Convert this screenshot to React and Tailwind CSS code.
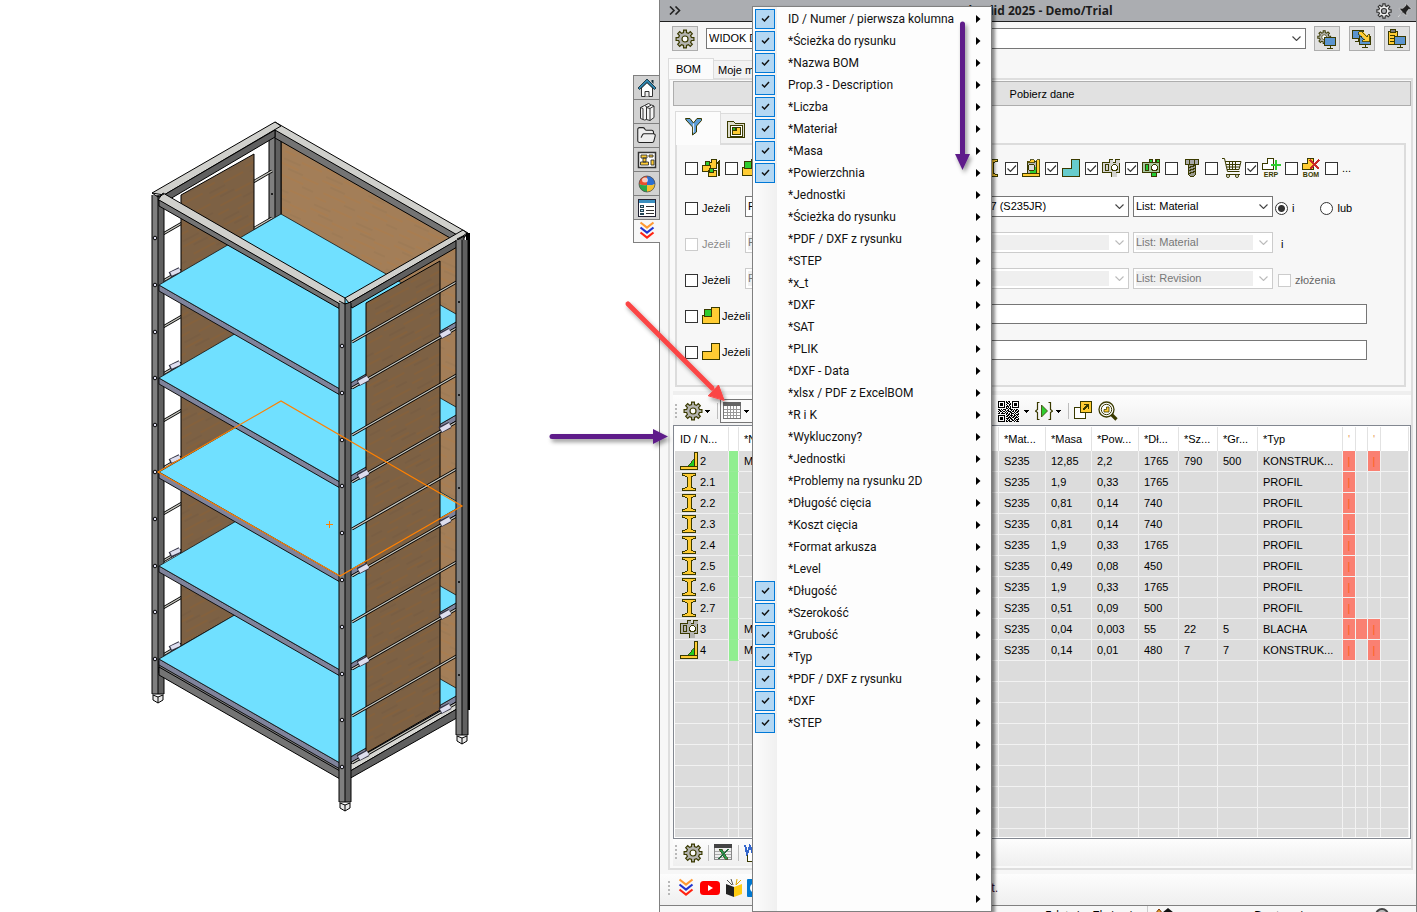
import React from "react";
import { FolderOpen } from "lucide-react";

const INK = "#3a3a00";

/* ---------- small drawings ---------- */

function gearPath(c, outer, inner, teeth) {
  const pts = [];
  const step = (Math.PI * 2) / teeth;
  for (let i = 0; i < teeth; i++) {
    const a = i * step;
    [[-0.3, inner], [-0.2, outer], [0.2, outer], [0.3, inner]].forEach(([k, r]) => {
      pts.push(`${(c + r * Math.sin(a + k * step)).toFixed(1)},${(c - r * Math.cos(a + k * step)).toFixed(1)}`);
    });
  }
  return `M${pts.join("L")}Z`;
}
const GEAR = gearPath(10, 9, 6.6, 8);

function Icon({ w = 20, h = 20, box, children, crisp = true, className = "" }) {
  return (
    <svg width={w} height={h} viewBox={box || `0 0 ${w} ${h}`} className={`shrink-0 ${className}`} shapeRendering={crisp ? "crispEdges" : "auto"} aria-hidden="true">
      {children}
    </svg>
  );
}

const Gear = () => (
  <Icon crisp={false}>
    <path d={GEAR} fill="#b4b4b0" stroke={INK} strokeWidth="1.2" />
    <circle cx="10" cy="10" r="3" fill="#fff" stroke={INK} strokeWidth="1.2" />
  </Icon>
);

const Monitor = ({ x, y }) => (
  <g>
    <rect x={x + 0.5} y={y + 0.5} width="11" height="8" fill="#5b95d0" stroke={INK} />
    <path d={`M${x + 6} ${y + 9}v2M${x + 3} ${y + 11.5}h6`} stroke={INK} fill="none" />
  </g>
);

const GearMonitor = () => (
  <Icon>
    <g transform="translate(0 1) scale(0.72)" shapeRendering="auto">
      <path d={GEAR} fill="#b4b4b0" stroke={INK} strokeWidth="1.4" />
      <circle cx="10" cy="10" r="3.4" fill="#fff" stroke={INK} />
    </g>
    <Monitor x={7} y={8} />
  </Icon>
);
const CopyMonitor = () => (
  <Icon>
    <Monitor x={0} y={1} />
    <Monitor x={7} y={7} />
    <path d="M6.5 2.5h4l5 5v-2h2v7h-7v-2h2l-6-6z" fill="#ffcc33" stroke={INK} strokeWidth="0.8" />
  </Icon>
);
const ClipMonitor = () => (
  <Icon>
    <rect x="1.5" y="2.5" width="9" height="13" fill="#ffcc33" stroke={INK} />
    <rect x="3.5" y="0.5" width="5" height="3" fill="#777" stroke={INK} />
    <path d="M3 6.5h5M3 9.5h4M3 12.5h4" stroke={INK} />
    <Monitor x={7} y={7} />
  </Icon>
);

const Funnel = () => (
  <Icon crisp={false}>
    <path d="M1.5 1.5h4.5l3.5 4.5 3.5-4.5h4.5v2l-5 5.5v6l-4 3v-8l-6.5-7z" fill="#5b9bd5" stroke={INK} />
    <path d="M9.5 6.5v9" stroke="#dbe9f6" strokeWidth="1.2" fill="none" />
  </Icon>
);
const FolderPart = () => (
  <Icon>
    <path d="M1.5 18.5v-16h6l2 2h9v14z" fill="#dcdccb" stroke={INK} strokeWidth="1.4" />
    <rect x="4.5" y="6.5" width="12" height="11" fill="#fff" stroke={INK} />
    <path d="M6.5 15.5v-4h4v-3h4v7z" fill="#ffcc33" stroke={INK} />
    <rect x="6.5" y="8.5" width="3" height="3" fill="#22b822" stroke={INK} />
  </Icon>
);
const Asm = () => (
  <Icon>
    <path d="M5.5 10.5v-6h4v-3h5v9z" fill="#ffcc33" stroke={INK} />
    <path d="M0.5 13.5v-6h8v6z" fill="#ffcc33" stroke={INK} />
    <rect x="3.5" y="3.5" width="4" height="4" fill="#2ecc2e" stroke={INK} />
    <path d="M6.5 18.5v-6h8v6z" fill="#ffcc33" stroke={INK} />
    <rect x="7.5" y="10.5" width="4" height="4" fill="#2ecc2e" stroke={INK} />
    <path d="M13 6l5-5v17h-2V6z" fill={INK} />
  </Icon>
);
const GreenPart = ({ green = true }) => (
  <Icon>
    <path d="M0.5 17.5v-8h9v-8h8v16z" fill="#ffcc33" stroke={INK} />
    {green && <rect x="2.5" y="3.5" width="7" height="7" fill="#2ecc2e" stroke={INK} />}
  </Icon>
);
const Beam = () => (
  <Icon w={18} h={20}>
    <path d="M2.5 1.5h13v2h-2l-2.5 1.5v10l2.5 1.5h2v2h-13v-2h2l2.5-1.5v-10l-2.5-1.5h-2z" fill="#ffcc33" stroke={INK} />
  </Icon>
);
const Weld = () => (
  <Icon>
    <path d="M5 3.5h9v13h-9z" fill="#b4b4b4" stroke={INK} />
    <path d="M5 3h3v-1.5h4v3h-7zM14.5 1.5h3v14h-3z" fill="#ffcc33" stroke={INK} strokeWidth="0.8" />
    <path d="M0.5 15.5h17v3h-17z" fill="#ffcc33" stroke={INK} />
    <path d="M8 15c0-4 3-6 6-6v6z" fill="#2ecc2e" />
    <circle cx="9.5" cy="9.5" r="3.2" fill="#ddd" stroke={INK} />
  </Icon>
);
const TealPart = () => (
  <Icon>
    <path d="M0.5 18.5v-8h9v-9h8v17z" fill="#66cccc" stroke={INK} />
  </Icon>
);
const Sheet = ({ fill = "#d4d4d0", accent = "#d4d4d0", body = fill }) => (
  <Icon>
    <path d="M0.5 4.5h7v-3h3v3h3v-3h4v13h-3v4h-5v-4h-9z" fill={body} stroke={INK} />
    <path d="M9.5 14.5h5v4h-5zM7.5 1.5h3v3h-3zM14.5 1.5h3v3h-3z" fill={accent} stroke={accent === body ? "none" : INK} />
    <rect x="3.5" y="6.5" width="3" height="6" fill={accent} stroke={INK} />
    <circle cx="12.5" cy="9.5" r="3" fill="#fff" stroke={INK} />
  </Icon>
);
const Bolt = () => (
  <Icon>
    <path d="M3.5 1.5h13v5h-13z" fill="#aaa" stroke={INK} />
    <path d="M7.5 1.5v5M12.5 1.5v5" stroke={INK} />
    <path d="M6.5 6.5h7v10l-2 2h-3l-2-2z" fill="#9a9a90" stroke={INK} />
    <path d="M7 9.5l6-2M7 12.5l6-2M7 15.5l6-2" stroke={INK} />
  </Icon>
);
const Cart = () => (
  <Icon crisp={false}>
    <path d="M0 0.5h2.5l3 13h12M3 3.5h16l-2 8H5M4 6.5h14M4.5 9h13M7.5 3.5v8M10.5 3.5v8M13.5 3.5v8M4 16.5h14" fill="none" stroke={INK} />
    <circle cx="6" cy="18" r="1.5" fill="#fff" stroke={INK} />
    <circle cx="15" cy="18" r="1.5" fill="#fff" stroke={INK} />
  </Icon>
);
const TinyLabel = ({ children }) => (
  <text x="9" y="19" textAnchor="middle" fontFamily="Liberation Sans, sans-serif" fontSize="7" fontWeight="700" fill={INK}>
    {children}
  </text>
);
const Erp = () => (
  <Icon>
    <path d="M0.5 11.5v-6h5v-5h6v11z" fill="#fff" stroke={INK} />
    <path d="M14 2v10M9 7h10" stroke="#2ecc2e" strokeWidth="2" />
    <TinyLabel>ERP</TinyLabel>
  </Icon>
);
const NoBom = () => (
  <Icon>
    <path d="M0.5 11.5v-6h5v-5h6v11z" fill="#ffcc33" stroke={INK} />
    <path d="M8 2l9 9M17 2l-9 9" stroke="#c82828" strokeWidth="1.6" />
    <TinyLabel>BOM</TinyLabel>
  </Icon>
);
const Angle = () => (
  <Icon w={19} h={20}>
    <path d="M14.5 1.5h3v14h-3z" fill="#ffcc33" stroke={INK} />
    <path d="M0.5 15.5h17v3h-17z" fill="#ffcc33" stroke={INK} />
    <path d="M8 15l6-7v7z" fill="#22cc22" stroke={INK} strokeWidth="0.8" />
  </Icon>
);

const TableIcon = () => (
  <Icon w={18} h={18}>
    <rect x="0.5" y="0.5" width="17" height="16" fill="#fff" stroke="#777" />
    <rect x="0" y="0" width="18" height="4" fill="#666" />
    <path d="M1 7.5h16M1 10.5h16M1 13.5h16M4.5 4v12M7.5 4v12M10.5 4v12M13.5 4v12" stroke="#999" />
  </Icon>
);
const QR_ROWS = [
  "111111101011001111111",
  "100000101101001000001",
  "101110100110101011101",
  "101110101001101011101",
  "101110100101001011101",
  "100000101110101000001",
  "111111101010101111111",
  "000000001101100000000",
  "110101110010111010110",
  "011010010110010101101",
  "101101101011101101011",
  "010010010100110010110",
  "110111101101011101001",
  "000000001011010010111",
  "111111100110111011010",
  "100000101101010110101",
  "101110100011101101110",
  "101110101110110011001",
  "101110100101011010111",
  "100000101011001101010",
  "111111101101110010111",
];
const Qr = () => (
  <Icon w={21} h={21}>
    {QR_ROWS.map((r, y) => r.split("").map((c, x) => (c === "1" ? <rect key={`${x}-${y}`} x={x} y={y} width="1" height="1" fill="#000" /> : null)))}
  </Icon>
);
const Run = () => (
  <Icon crisp={false} w={18}>
    <path d="M4.5 1.5h-2v7l-2 1.5 2 1.5v7h2M13.5 1.5h2v7l2 1.5-2 1.5v7h-2" fill="none" stroke={INK} strokeWidth="1.2" />
    <path d="M6.5 4v12l6-6z" fill="#2ecc2e" stroke={INK} strokeWidth="0.8" />
  </Icon>
);
const OpenExt = () => (
  <Icon>
    <path d="M0.5 6.5h11v11h-11z" fill="#fff" stroke={INK} />
    <path d="M6.5 0.5h11v11h-11z" fill="#ffcc33" stroke={INK} />
    <path d="M9 9l5-5M10 3.5h4.5V8" stroke={INK} strokeWidth="1.5" fill="none" />
  </Icon>
);
const Search = () => (
  <Icon crisp={false}>
    <circle cx="8.5" cy="8.5" r="7.5" fill="#fff" stroke={INK} strokeWidth="1.3" />
    <circle cx="8.5" cy="8.5" r="5.2" fill="#fff" stroke={INK} />
    <path d="M6 11V8.5h2.5V6H11v5z" fill="#ffcc33" stroke={INK} strokeWidth="0.8" />
    <path d="M13.5 13.5l5 5" stroke={INK} strokeWidth="3.2" />
  </Icon>
);
const Excel = () => (
  <Icon w={18} h={18}>
    <rect x="0.5" y="0.5" width="17" height="15" fill="#eee" stroke="#888" />
    <rect width="18" height="4" fill="#444" />
    <path d="M1 7.5h16M1 10.5h16M1 13.5h16" stroke="#aaa" />
    <path d="M5 5h3l6 10h-3z" fill="#2a9a50" stroke={INK} strokeWidth="0.6" />
    <path d="M14 5l-9 10" stroke="#2a6a40" strokeWidth="1.5" />
  </Icon>
);
const Word = () => (
  <Icon w={18} h={18}>
    <path d="M3.5 8v9.5h13V2.5h-3" fill="#fff" stroke={INK} />
    <path d="M1 1l2 9 3-8 3 8 2-9" fill="none" stroke="#3366cc" strokeWidth="2" />
  </Icon>
);
const Chevrons = () => (
  <Icon w={20} h={20} crisp={false}>
    <path d="M3.5 1.5l6.5 5 6.5-5" fill="none" stroke="#ff9933" strokeWidth="2.2" />
    <path d="M3.5 6.5l6.5 5 6.5-5" fill="none" stroke="#2233cc" strokeWidth="2.2" />
    <path d="M3.5 11.5l6.5 5 6.5-5" fill="none" stroke="#ff2211" strokeWidth="2.2" />
  </Icon>
);
const Video = () => (
  <Icon w={20} h={14} crisp={false}>
    <rect width="20" height="14" rx="3.5" fill="#f00" />
    <path d="M8 4v6l5-3z" fill="#fff" />
  </Icon>
);
const Book = () => (
  <Icon w={18} h={20} crisp={false}>
    <path d="M1 6l8 3v10l-8-3z" fill="#222" />
    <path d="M9 9l8-3v10l-8 3z" fill="#ffcc11" />
    <path d="M2 2l5 5M6 1l2 6" stroke="#555" />
    <path d="M16 2l-5 5M12 1l-1 6" stroke="#e0a800" />
  </Icon>
);
const Contact = () => (
  <Icon w={18} h={20} crisp={false}>
    <rect y="1" width="18" height="18" rx="1" fill="#0078d0" />
    <circle cx="8" cy="10" r="4" fill="none" stroke="#fff" strokeWidth="2" />
  </Icon>
);
const House = () => (
  <Icon crisp={false}>
    <path d="M4.5 10v8.5h11V10L10 4.5z" fill="#fff" stroke="#333" />
    <path d="M8 18.5v-5h4v5" fill="#eee" stroke="#333" />
    <path d="M10 1l9 9-1.5 1.5L10 4.5l-7.5 7L1 10z" fill="#2f86b0" stroke="#16303c" strokeWidth="0.9" />
    <path d="M14.5 2h2v4l-2-2z" fill="#16303c" />
  </Icon>
);
const Books = () => (
  <Icon crisp={false}>
    <path d="M3.5 5.5l4-2 2 1v13l-2 .5-4-1.5zM7.5 3.5l4-2 2 1v14l-4 1" fill="#f4f4f4" stroke="#333" />
    <path d="M9.5 5.5l5-2.5 2.5 1v11.5l-4 3-3.5-1z" fill="#f4f4f4" stroke="#333" />
    <path d="M3.5 5.5l2.5 1v11M9.5 5.5l3.5 1v12M13 6.5l4-2.5" stroke="#333" fill="none" />
  </Icon>
);
const Palette = () => (
  <Icon crisp={false}>
    <rect x="1.5" y="2.5" width="17" height="15" fill="#fff" stroke="#333" strokeWidth="1.5" />
    <path d="M4 5h6v3H4zM12 5h4v2h-4zM6 8h3v4H6zM3.5 12h8v3h-8zM14 10h3v5h-3z" fill="#ffcc33" stroke="#333" strokeWidth="0.9" />
  </Icon>
);
const Ball = () => (
  <Icon crisp={false}>
    <path d="M10 2a8 8 0 0 0-8 8q4 2 8 1z" fill="#e8502c" />
    <path d="M10 2a8 8 0 0 1 8 8q-4 2-8 1z" fill="#2d6fd2" />
    <path d="M2 10a8 8 0 0 0 8 8v-7q-4 1-8-1z" fill="#2ba84a" />
    <path d="M18 10a8 8 0 0 1-8 8v-7q4 1 8-1z" fill="#f5c02c" />
    <ellipse cx="8" cy="6" rx="3" ry="2.5" fill="#fff" opacity="0.7" />
    <circle cx="10" cy="10" r="8" fill="none" stroke="#444" strokeWidth="0.7" />
  </Icon>
);
const Props = () => (
  <Icon>
    <rect x="1.5" y="1.5" width="17" height="17" fill="#fff" stroke="#223" />
    <rect x="2" y="2" width="16" height="3" fill="#3a8fc0" />
    <path d="M3.5 7.5h3v2h-3zM3.5 11.5h3v2h-3zM3.5 15.5h3v1h-3z" fill="#bde" stroke="#245" />
    <path d="M9 8.5h8M9 12.5h8M9 15.5h8" stroke="#333" />
  </Icon>
);
const Pin = () => (
  <Icon w={15} h={15} box="0 0 14 14" crisp={false}>
    <path d="M8.5 0.5l5 5-1.5.5-1-.2L9 8.5v3.500L5.500 9 1 13l4-4.500L2 5h3.500l2.700-2.500z" fill="#222" stroke="#eee" strokeWidth="0.5" />
  </Icon>
);
const Caret = () => (
  <Icon w={5} h={3}>
    <path d="M0 0h5L2.5 3z" fill="#000" />
  </Icon>
);

/* ---------- 3D model ---------- */

const SHELVES = [659, 566, 472, 378, 285];
const RODS = [235, 282, 328, 375, 422, 469, 515, 562, 609, 656];
const SIDE_RODS = [342, 388, 435, 482, 529, 576, 622, 669, 716, 763];

function Post({ x, top, bottom }) {
  return (
    <g>
      <rect x={x} y={top} width="12" height={bottom - top} fill="#7f7f7f" />
      <rect x={x + 6} y={top} width="6" height={bottom - top} fill="#606060" />
      <path d={`M${x} ${top}V${bottom}M${x + 6} ${top}V${bottom}M${x + 12} ${top}V${bottom}`} stroke="#000" />
      <path d={`M${x} ${bottom}h12`} stroke="#000" />
      <path d={`M${x + 1} ${bottom + 1}l5 2 5-2v5l-5 3-5-3z`} fill="#e8e8e8" stroke="#000" />
      <path d={`M${x + 6} ${bottom + 3}v6`} stroke="#000" />
    </g>
  );
}

function Rack() {
  return (
    <svg viewBox="0 0 633 912" className="block w-full max-w-[633px] shrink-0" role="img" aria-label="Model 3D regału">
      <defs>
        <pattern id="dark" width="46" height="30" patternUnits="userSpaceOnUse" patternTransform="rotate(-28)">
          <rect width="46" height="30" fill="#7d6144" />
          <path d="M0 4h20M26 9h18M6 15h24M0 22h12M20 26h22" stroke="#8b6135" strokeWidth="1" />
          <path d="M10 7h16M30 18h12M2 29h18" stroke="#745b42" strokeWidth="1" />
        </pattern>
        <pattern id="light" width="46" height="30" patternUnits="userSpaceOnUse" patternTransform="rotate(24)">
          <rect width="46" height="30" fill="#a37e58" />
          <path d="M0 4h20M26 9h18M6 15h24M0 22h12M20 26h22" stroke="#ad7c49" strokeWidth="1" />
          <path d="M10 7h16M30 18h12M2 29h18" stroke="#9a7854" strokeWidth="1" />
        </pattern>
      </defs>
      <g strokeWidth="1">
        <path d="M281 134L464 240V700L281 590z" fill="url(#light)" stroke="#000" />
        <g>
          <rect x="269" y="130" width="12" height="470" fill="#7f7f7f" />
          <rect x="275" y="130" width="6" height="470" fill="#606060" />
          <path d="M269 132v460M275 132v460M281 132v460" stroke="#000" />
          <circle cx="272" cy="194" r="1" />
        </g>
        {RODS.map((y, i) => (
          <g key={y}>
            <path d={`M163 ${y - 1}L272 ${y - 64}`} stroke="#000" strokeWidth="3" />
            <path d={`M163 ${y - 1}L272 ${y - 64}`} stroke="#c8c8c0" strokeWidth="1.4" />
            {i % 2 === 1 && <path d={`M170 ${y - 7}l10-5`} stroke="#334" strokeWidth="6" />}
            {i % 2 === 1 && <path d={`M171 ${y - 8}l9-4`} stroke="#dde" strokeWidth="4" />}
          </g>
        ))}
        <path d="M181 195L254 154V604L181 646z" fill="url(#dark)" stroke="#000" />
        <Post x={152} top={195} bottom={694} />
        <path d="M159 661L340 765L462 696V702L340 777L159 673z" fill="#7f7f7f" stroke="#000" />
        <path d="M340 770L462 699V706L340 777z" fill="#d8d8d4" stroke="#000" />
        <path d="M340 777L462 706V715L340 784z" fill="#606060" stroke="#000" />
        {SHELVES.map((y) => (
          <g key={y}>
            <path d={`M159 ${y}L340 ${y + 104}L463 ${y + 33}v6L340 ${y + 110}L159 ${y + 6}z`} fill="#7f839b" stroke="#111" />
            <path d={`M159 ${y}L281 ${y - 71}L463 ${y + 33}L340 ${y + 104}z`} fill="#70e0ff" stroke="#111" strokeWidth="0.8" />
          </g>
        ))}
        <path d="M159 667L340 771V779L159 675z" fill="#747474" stroke="#000" />
        <path d="M366 303L440 261V710L366 753z" fill="url(#dark)" stroke="#000" />
        {SIDE_RODS.map((y, i) => (
          <g key={y}>
            <path d={`M352 ${y}L460 ${y - 62}`} stroke="#000" strokeWidth="3" />
            <path d={`M352 ${y}L460 ${y - 62}`} stroke="#c8c8c0" strokeWidth="1.4" />
            {i % 2 === 1 && (
              <g>
                <path d={`M358 ${y - 5}l10-5M440 ${y - 52}l10-5`} stroke="#334" strokeWidth="6.5" />
                <path d={`M359 ${y - 5}l9-5M441 ${y - 52}l9-5`} stroke="#dde" strokeWidth="4.5" />
              </g>
            )}
          </g>
        ))}
        <path d="M275 122L468 233L463 239L270 128z" fill="#d0d0cc" stroke="#000" />
        <path d="M275 130L459 236V243L275 138z" fill="#747474" stroke="#000" />
        <path d="M152 193L275 122L281 126L164 195z" fill="#d0d0cc" stroke="#000" />
        <path d="M164 195L275 130V137L170 199z" fill="#606060" stroke="#000" />
        <path d="M163 193L345 298V304L340 305L158 200z" fill="#d0d0cc" stroke="#000" />
        <path d="M159 200L340 304V309L159 206z" fill="#747474" stroke="#000" />
        <path d="M345 298L463 230L468 234L349 303z" fill="#d0d0cc" stroke="#000" />
        <path d="M349 303L464 236V243L352 308z" fill="#606060" stroke="#000" />
        <rect x="466" y="233" width="4" height="477" fill="#000" />
        <Post x={339} top={303} bottom={802} />
        <Post x={456} top={240} bottom={735} />
        <path d="M152 193l6 4 6-3M339 301l6 3 6-2M457 239l6-3 4-3" fill="none" stroke="#000" />
        <g fill="none" stroke="#ff8000">
          <path d="M158 472L281 401L462 506L340 576z" strokeWidth="1.2" />
          <path d="M326 524.5h7M329.5 521v7" />
        </g>
        {[238, 285, 332, 378, 425, 472, 519, 566, 612, 659].map((y) => (
          <g key={y} fill="#dde" stroke="#000">
            <circle cx="155" cy={y} r="1.8" />
            <circle cx="342" cy={y + 108} r="1.8" />
          </g>
        ))}
        {[302, 395, 488, 582, 675].map((y) => (
          <circle key={y} cx="459" cy={y} r="1" />
        ))}
      </g>
    </svg>
  );
}

/* ---------- data ---------- */

const MENU = [
  "ID / Numer / pierwsza kolumna", "*Ścieżka do rysunku", "*Nazwa BOM", "Prop.3 - Description", "*Liczba", "*Materiał",
  "*Masa", "*Powierzchnia", "*Jednostki", "*Ścieżka do rysunku", "*PDF / DXF z rysunku", "*STEP", "*x_t", "*DXF", "*SAT",
  "*PLIK", "*DXF - Data", "*xlsx / PDF z ExcelBOM", "*R i K", "*Wykluczony?", "*Jednostki", "*Problemy na rysunku 2D",
  "*Długość cięcia", "*Koszt cięcia", "*Format arkusza", "*Level", "*Długość", "*Szerokość", "*Grubość", "*Typ",
  "*PDF / DXF z rysunku", "*DXF", "*STEP", "", "", "", "", "", "", "", "",
];
const isChecked = (i) => i < 8 || (i >= 26 && i <= 32);

const ROWS = [
  ["angle", "2", "M", "12,85", "2,2", "1765", "790", "500", "KONSTRUK...", 1, 0, 1],
  ["beam", "2.1", "", "1,9", "0,33", "1765", "", "", "PROFIL", 1, 0, 0],
  ["beam", "2.2", "", "0,81", "0,14", "740", "", "", "PROFIL", 1, 0, 0],
  ["beam", "2.3", "", "0,81", "0,14", "740", "", "", "PROFIL", 1, 0, 0],
  ["beam", "2.4", "", "1,9", "0,33", "1765", "", "", "PROFIL", 1, 0, 0],
  ["beam", "2.5", "", "0,49", "0,08", "450", "", "", "PROFIL", 1, 0, 0],
  ["beam", "2.6", "", "1,9", "0,33", "1765", "", "", "PROFIL", 1, 0, 0],
  ["beam", "2.7", "", "0,51", "0,09", "500", "", "", "PROFIL", 1, 0, 0],
  ["sheet", "3", "M", "0,04", "0,003", "55", "22", "5", "BLACHA", 1, 1, 1],
  ["angle", "4", "M", "0,14", "0,01", "480", "7", "7", "KONSTRUK...", 1, 0, 1],
];
const EMPTY_ROWS = Array.from({ length: 40 }, (_, i) => i);
const HEAD = ["ID / N...", "", "*N", "*Mat...", "*Masa", "*Pow...", "*Dł...", "*Sz...", "*Gr...", "*Typ", "'", "", "'", ""];

const FILTERS = [
  [Asm, false, "Złożenia"], [GreenPart, false, "Podzłożenia"], [TealPart, false, "Części"], [Angle, false, "Spawane"],
  [Angle, false, "Konstrukcje"], [Sheet, false, "Arkusze"], [Beam, false, "Belki"], [Beam, true, "Profile"],
  [Weld, true, "Konstrukcje spawane"], [TealPart, true, "Części proste"], [Sheet, true, "Blachy"],
  [() => <Sheet accent="#22cc33" body="#a8c8a0" />, true, "Blachy w złożeniu"], [Bolt, false, "Normalia"], [Cart, false, "Zakupowe"],
  [Erp, true, "ERP"], [NoBom, false, "Wykluczone z BOM"],
];

/* ---------- controls ---------- */

function Check({ label, ...p }) {
  return (
    <span className="relative block size-[13px] shrink-0">
      <input type="checkbox" aria-label={label} className="peer m-0 block size-[13px] appearance-none border border-[#333] bg-white disabled:border-[#ccc]" {...p} />
      <svg width="13" height="13" viewBox="0 0 13 13" className="pointer-events-none absolute inset-0 hidden peer-checked:block" aria-hidden="true">
        <path d="M2.5 6.5l3 3 5.5-6" fill="none" stroke="#333" strokeWidth="1.2" />
      </svg>
    </span>
  );
}

function Combo({ label, value, disabled, className = "" }) {
  return (
    <div className={`relative h-[21px] border bg-white ${disabled ? "border-[#ccc] text-[#777]" : "border-[#767676] text-black"} ${className}`}>
      <div className="h-full p-[2px] pr-[19px]">
        <select aria-label={label} disabled={disabled} defaultValue={value} className={`block h-full w-full appearance-none pb-px leading-[14px] opacity-100 outline-none ${disabled ? "bg-[#efefef]" : "bg-white"}`}>
          <option>{value}</option>
        </select>
      </div>
      <svg width="9" height="5" viewBox="0 0 9 5" className="pointer-events-none absolute top-[7px] right-[4px]" aria-hidden="true">
        <path d="M0.5 0.5l4 4 4-4" fill="none" stroke={disabled ? "#bbb" : "#444"} strokeWidth="1.1" />
      </svg>
    </div>
  );
}

const Grip = () => (
  <Icon w={3} h={15}>
    <path d="M0 0h2v2h-2zM0 4h2v2h-2zM0 8h2v2h-2zM0 12h2v2h-2z" fill="#b8b8b8" />
  </Icon>
);

function ToolButton({ label, children, className = "justify-center" }) {
  return (
    <button type="button" aria-label={label} className={`flex shrink-0 items-center ${className}`}>
      {children}
    </button>
  );
}

const sideTabs = [
  ["Zasoby", <House key="i" />],
  ["Biblioteka", <Books key="i" />],
  ["Eksplorator", <FolderOpen key="i" size={21} strokeWidth={1.2} color="#222" fill="#eee" />],
  ["Paleta widoków", <Palette key="i" />],
  ["Wyglądy", <Ball key="i" />],
  ["Właściwości", <Props key="i" />],
];

function TopBar() {
  return (
    <header className="flex h-[22px] shrink-0 items-center border-b border-[#1e1e1e] bg-[#abadb1]">
      <svg width="12" height="9" viewBox="0 0 12 9" className="ml-[9px] shrink-0" aria-hidden="true">
        <path d="M1 0.5l4 4-4 4M6.5 0.5l4 4-4 4" fill="none" stroke="#222" strokeWidth="1.6" />
      </svg>
      <h1 className="flex-1 text-center font-['Open_Sans','Noto_Sans',sans-serif] text-xs leading-5 font-bold text-[#1c1c1c]">
        MarkSolid 2025 - Demo/Trial
      </h1>
      <ToolButton label="Ustawienia" className="mr-[5px]">
        <Icon w={16} h={16} box="0 0 20 20" crisp={false}>
          <path d={GEAR} fill="#eee" stroke="#333" strokeWidth="1.4" />
          <circle cx="10" cy="10" r="3.2" fill="#abadb1" stroke="#333" strokeWidth="1.4" />
        </Icon>
      </ToolButton>
      <ToolButton label="Przypnij" className="mr-[4px]">
        <Pin />
      </ToolButton>
    </header>
  );
}

function CondRow({ children, disabled, label = "Jeżeli", id, icon }) {
  return (
    <div className="flex h-9 items-center">
      <Check id={id} disabled={disabled} />
      {icon ? <span className="ml-1 flex h-5 w-5 shrink-0 items-center">{icon}</span> : <span className="w-1 shrink-0" />}
      <label htmlFor={id} className={`w-[43px] shrink-0 whitespace-nowrap ${disabled ? "text-[#8a8a8a]" : ""}`}>
        {label}
      </label>
      {children}
    </div>
  );
}

function FieldCombo(p) {
  return (
    <div className={`mb-[3px] shrink-0 ${p.wide ? "ml-1 w-[260px]" : p.first ? "w-[120px]" : "ml-1 w-[140px]"}`}>
      <Combo label={p.label} value={p.value} disabled={p.disabled} className={p.wide && !p.disabled ? "pl-[91px]" : ""} />
    </div>
  );
}

function Filters() {
  const textCls = "mr-[37px] mb-1 h-5 min-w-0 flex-1 border border-[#767676] bg-white px-1";
  return (
    <section className="mr-[5px] ml-[2px] shrink-0 border-2 border-[#dcdcdc] bg-[#f7f7f7] pt-[5px] pb-[15px] pl-2">
      <div className="mb-1 flex h-9 items-center">
        {FILTERS.map(([Ic, on, label], i) => (
          <div key={i} className="flex w-10 shrink-0 items-center gap-1">
            <Check label={label} defaultChecked={on} />
            <Ic />
          </div>
        ))}
        <label className="flex items-center gap-1">
          <Check />
          ...
        </label>
      </div>
      <CondRow id="c1">
        <FieldCombo first label="Pole" value="Folder" />
        <FieldCombo wide label="Wartość" value="1.0037 (S235JR)" />
        <FieldCombo label="Lista" value="List: Material" />
        <label className="ml-[2px] flex items-center gap-1">
          <input type="radio" name="op" defaultChecked className="m-0 size-[13px] appearance-none rounded-full border border-[#333] bg-[radial-gradient(#333_0_3px,#fff_4px)]" />
          <span>i</span>
        </label>
        <label className="ml-[26px] flex items-center gap-1">
          <input type="radio" name="op" className="m-0 size-[13px] appearance-none rounded-full border border-[#333] bg-white" />
          <span>lub</span>
        </label>
      </CondRow>
      <CondRow id="c2" disabled>
        <FieldCombo first label="Pole" value="Folder" disabled />
        <FieldCombo wide label="Wartość" value="" disabled />
        <FieldCombo label="Lista" value="List: Material" disabled />
        <span className="ml-2">i</span>
      </CondRow>
      <CondRow id="c3">
        <FieldCombo first label="Pole" value="Folder" disabled />
        <FieldCombo wide label="Wartość" value="" disabled />
        <FieldCombo label="Lista" value="List: Revision" disabled />
        <label className="ml-[5px] flex items-center gap-1 text-[#666]">
          <Check disabled />
          złożenia
        </label>
      </CondRow>
      <CondRow id="c4" icon={<GreenPart />}>
        <input type="text" aria-label="Warunek złożenia" className={textCls} />
      </CondRow>
      <CondRow id="c5" icon={<GreenPart green={false} />}>
        <input type="text" aria-label="Warunek części" className={textCls} />
      </CondRow>
    </section>
  );
}

const rowIcon = { angle: <Angle />, beam: <Beam />, sheet: <Sheet fill="#b4b4b0" accent="#b4b4b0" /> };
const td = "h-[21px] overflow-hidden border-r border-b border-[#f2f2f2] p-0 pl-[5px] whitespace-nowrap";

function Mark({ on, bar }) {
  return <td className={`h-[21px] border-r border-b border-[#f2f2f2] p-0 text-center text-[#ff6020] ${on ? "bg-[#fa8072]" : ""}`}>{on && bar ? "|" : ""}</td>;
}

function PartsTable() {
  return (
    <div className="min-h-0 flex-1 overflow-hidden border border-[#828790] bg-white p-px">
      <div className="h-full overflow-hidden bg-[#dcdcdc]">
        <table className="w-full table-fixed border-separate border-spacing-0">
          <colgroup>
            <col className="w-[54px]" />
            <col className="w-[10px]" />
            <col className="w-[260px]" />
            <col className="w-[47px]" />
            <col className="w-[46px]" />
            <col className="w-[47px]" />
            <col className="w-[40px]" />
            <col className="w-[39px]" />
            <col className="w-[40px]" />
            <col className="w-[85px]" />
            <col className="w-[13px]" />
            <col className="w-[12px]" />
            <col className="w-[13px]" />
            <col />
          </colgroup>
          <thead>
            <tr className="bg-white">
              {HEAD.map((h, i) => (
                <th key={i} scope="col" className={`h-6 overflow-hidden border-r border-[#e2e2e2] p-0 pl-[5px] text-left font-normal whitespace-nowrap ${h === "'" ? "text-[#e8a060]" : ""}`}>
                  {h}
                </th>
              ))}
            </tr>
          </thead>
          <tbody>
            {ROWS.map((r) => (
              <tr key={r[1]}>
                <td className={td}>
                  <span className="flex h-5 items-center">
                    <span className="flex w-5 shrink-0">{rowIcon[r[0]]}</span>
                    {r[1]}
                  </span>
                </td>
                <td className="border-r border-b border-r-[#f2f2f2] border-b-[#98ec98] bg-[#90ee90] p-0" />
                <td className={td}>{r[2]}</td>
                <td className={td}>S235</td>
                {r.slice(3, 9).map((c, i) => (
                  <td key={i} className={td}>{c}</td>
                ))}
                <Mark on={r[9]} bar />
                <Mark on={r[10]} />
                <Mark on={r[11]} bar />
                <td className={td} />
              </tr>
            ))}
            {EMPTY_ROWS.map((n) => (
              <tr key={n}>
                {HEAD.map((_, i) => (
                  <td key={i} className={td} />
                ))}
              </tr>
            ))}
          </tbody>
        </table>
      </div>
    </div>
  );
}

function ColumnMenu() {
  return (
    <ul role="menu" className="absolute top-[6px] left-[92px] z-10 w-[240px] border border-[#808080] bg-[#fdfdfd] bg-[linear-gradient(90deg,#fcfcfc,#f0f0f0_24px,#fdfdfd_24px)] py-px pl-[2px] font-[Roboto,'Noto_Sans',sans-serif] text-xs text-[#111] shadow-[3px_2px_3px_rgba(0,0,0,0.45)]">
      {MENU.map((m, i) => (
        <li key={i} role="none">
          <button type="button" role="menuitemcheckbox" aria-checked={isChecked(i)} aria-label={m || "Kolumna"} className="flex h-[22px] w-full items-center text-left">
            <span className={`flex size-5 shrink-0 items-center justify-center ${isChecked(i) ? "border border-[#0078d7] bg-[#b3d7f3]" : ""}`}>
              {isChecked(i) && (
                <svg width="9" height="8" viewBox="0 0 9 8" aria-hidden="true">
                  <path d="M1 3.5l2.5 2.5L8 1" fill="none" stroke="#111" strokeWidth="1.5" />
                </svg>
              )}
            </span>
            <span className="flex-1 pl-[13px] whitespace-nowrap">{m}</span>
            <svg width="5" height="8" viewBox="0 0 5 8" className="mr-[10px] shrink-0" aria-hidden="true">
              <path d="M0 0l4.5 4L0 8z" fill="#000" />
            </svg>
          </button>
        </li>
      ))}
    </ul>
  );
}

function Arrows() {
  return (
    <svg width="440" height="460" viewBox="540 0 440 460" className="pointer-events-none absolute top-0 left-[-120px] z-20" aria-hidden="true">
      <defs>
        <filter id="sh" filterUnits="userSpaceOnUse" x="540" y="0" width="440" height="460">
          <feDropShadow dx="2" dy="3" stdDeviation="2" floodOpacity="0.4" />
        </filter>
      </defs>
      <g filter="url(#sh)" strokeLinecap="round" strokeWidth="5">
        <path d="M962.5 24v132" stroke="#5e1f8a" />
        <path d="M955 154h15l-7.5 16z" fill="#5e1f8a" />
        <path d="M552 436.5h104" stroke="#5e1f8a" />
        <path d="M653 429v15l15-7.5z" fill="#5e1f8a" />
        <path d="M628 304l84 84" stroke="#fb4545" />
        <path d="M724 400l-5.5-15-10 10.5z" fill="#fb4545" stroke="#fb4545" strokeWidth="1" />
      </g>
    </svg>
  );
}

const outBtn = "h-[25px] w-[26px] justify-center border border-[#adadad] bg-[#e1e1e1]";

export default function App() {
  return (
    <div className="flex h-screen overflow-hidden bg-white font-['Liberation_Sans',Arial,sans-serif] text-[11px] leading-[14px] text-black">
      <main className="min-w-0 flex-[633]">
        <Rack />
      </main>

      <nav aria-label="Okienko zadań" className="flex w-[26px] shrink-0 flex-col pt-[75px]">
        {sideTabs.map(([label, icon]) => (
          <button key={label} type="button" aria-label={label} className="flex h-6 shrink-0 items-center justify-center border-t border-l border-[#808080] bg-[#d2d2d2]">
            {icon}
          </button>
        ))}
        <button type="button" aria-label="Lista BOM" className="z-[1] -mr-px flex h-6 shrink-0 items-center justify-center border border-r-0 border-[#808080] bg-[#f7f7f7]">
          <Chevrons />
        </button>
      </nav>

      <aside className="relative flex min-w-0 flex-[756] flex-col border-r border-l border-[#808080] bg-[#f7f7f7]">
        <TopBar />
        <div className="flex shrink-0 items-center pt-1 pr-[6px] pb-[7px] pl-3">
          <ToolButton label="Opcje" className={outBtn}>
            <Gear />
          </ToolButton>
          <Combo label="Widok" value="WIDOK DOMYŚLNY" className="ml-2 min-w-0 flex-1" />
          <ToolButton label="Ustawienia widoku" className={`ml-2 ${outBtn}`}>
            <GearMonitor />
          </ToolButton>
          <ToolButton label="Kopiuj widok" className={`ml-[9px] ${outBtn}`}>
            <CopyMonitor />
          </ToolButton>
          <ToolButton label="Wklej widok" className={`ml-[9px] ${outBtn}`}>
            <ClipMonitor />
          </ToolButton>
        </div>

        <div className="relative z-[1] -mb-px flex shrink-0 items-end pl-2">
          <button type="button" className="h-[21px] w-[46px] border border-b-0 border-[#dcdcdc] bg-[#fbfbfb] pr-[5px]">BOM</button>
          <button type="button" className="mb-px h-[18px] border border-b-0 border-l-0 border-[#dcdcdc] bg-[#f2f2f2] px-1">Moje makra</button>
        </div>

        <div className="mr-[3px] ml-2 flex min-h-0 flex-1 flex-col border-2 border-[#dedede] bg-[#f9f9f9] pt-px pb-[2px] pl-[3px]">
          <button type="button" className="h-[25px] w-full shrink-0 border border-[#adadad] bg-[#e1e1e1]">Pobierz dane</button>

          <div className="relative z-[1] mt-[5px] -mb-[2px] ml-[2px] flex shrink-0 items-end">
            <ToolButton label="Filtry" className="h-[34px] w-[46px] justify-center border border-b-0 border-[#dcdcdc] bg-[#fcfcfc] pr-2 pb-1">
              <Funnel />
            </ToolButton>
            <ToolButton label="Foldery" className="mb-[2px] h-[30px] w-10 justify-center border border-b-0 border-l-0 border-[#dcdcdc] bg-[#f2f2f2] pr-[10px]">
              <FolderPart />
            </ToolButton>
          </div>
          <Filters />
          <div className="mt-[4px] h-[4px] shrink-0 bg-[#efefef]" />

          <div className="flex h-[30px] shrink-0 items-center bg-[linear-gradient(#fdfdfd,#f1f1f1)] pt-[2px] pl-[2px]">
            <Grip />
            <ToolButton label="Ustawienia tabeli" className="ml-[5px] gap-[2px]">
              <Gear />
              <Caret />
            </ToolButton>
            <span className="mr-[2px] ml-[7px] h-4 w-px shrink-0 bg-[#bdbdbd]" />
            <ToolButton label="Kolumny" className="h-6 w-[38px] gap-[3px] border border-[#777] bg-[#fafafa] pl-[2px]">
              <TableIcon />
              <Caret />
            </ToolButton>
            <span className="w-[240px] shrink-0" />
            <ToolButton label="Kod QR" className="gap-[5px]">
              <Qr />
              <Caret />
            </ToolButton>
            <ToolButton label="Uruchom" className="ml-[6px] gap-[3px]">
              <Run />
              <Caret />
            </ToolButton>
            <span className="ml-[7px] h-4 w-px shrink-0 bg-[#bdbdbd]" />
            <ToolButton label="Otwórz" className="ml-[5px]">
              <OpenExt />
            </ToolButton>
            <ToolButton label="Szukaj" className="ml-1">
              <Search />
            </ToolButton>
          </div>

          <PartsTable />

          <div className="flex h-[27px] shrink-0 items-center bg-[linear-gradient(#fdfdfd,#efefef)] pl-[2px]">
            <Grip />
            <ToolButton label="Opcje eksportu" className="ml-[5px]">
              <Gear />
            </ToolButton>
            <span className="ml-[5px] h-4 w-px shrink-0 bg-[#bdbdbd]" />
            <ToolButton label="Excel" className="ml-[5px]">
              <Excel />
            </ToolButton>
            <span className="ml-[6px] h-4 w-px shrink-0 bg-[#bdbdbd]" />
            <ToolButton label="Word" className="ml-[5px]">
              <Word />
            </ToolButton>
          </div>
        </div>

        <footer className="mt-[4px] shrink-0">
          <div className="flex h-[32px] items-center border-b border-[#808080] bg-[linear-gradient(#fdfdfd,#efefef)] pb-[3px] pl-2">
            <Grip />
            <ToolButton label="Strona" className="ml-[5px]">
              <Chevrons />
            </ToolButton>
            <ToolButton label="Filmy" className="ml-1">
              <Video />
            </ToolButton>
            <ToolButton label="Pomoc" className="ml-[5px]">
              <Book />
            </ToolButton>
            <ToolButton label="Kontakt" className="ml-1">
              <Contact />
            </ToolButton>
            <span className="ml-[226px] font-[Roboto,'Noto_Sans',sans-serif] text-xs text-[#401030]">t.</span>
          </div>
          <div className="flex h-[6px] items-start overflow-hidden pl-[385px] font-['Open_Sans','Noto_Sans',sans-serif] text-xs leading-[20px]">
            <span className="w-[102px] shrink-0">Edytuje: Złożenie</span>
            <span className="h-[18px] w-px shrink-0 bg-[#ccc]" />
            <svg width="26" height="10" viewBox="0 0 26 10" className="ml-1 shrink-0" aria-hidden="true">
              <path d="M3 8l4-5 4 5z" fill="#e0a030" stroke="#803000" />
              <path d="M10 7l6-5 6 5z" fill="#111" />
            </svg>
            <span className="ml-[76px] w-[95px] shrink-0">Dostosuj</span>
            <svg width="18" height="10" viewBox="0 0 18 10" className="ml-6 shrink-0" aria-hidden="true">
              <circle cx="9" cy="9" r="6" fill="#bbb" stroke="#444" strokeWidth="2" />
            </svg>
          </div>
        </footer>

        <ColumnMenu />
        <Arrows />
      </aside>
    </div>
  );
}
